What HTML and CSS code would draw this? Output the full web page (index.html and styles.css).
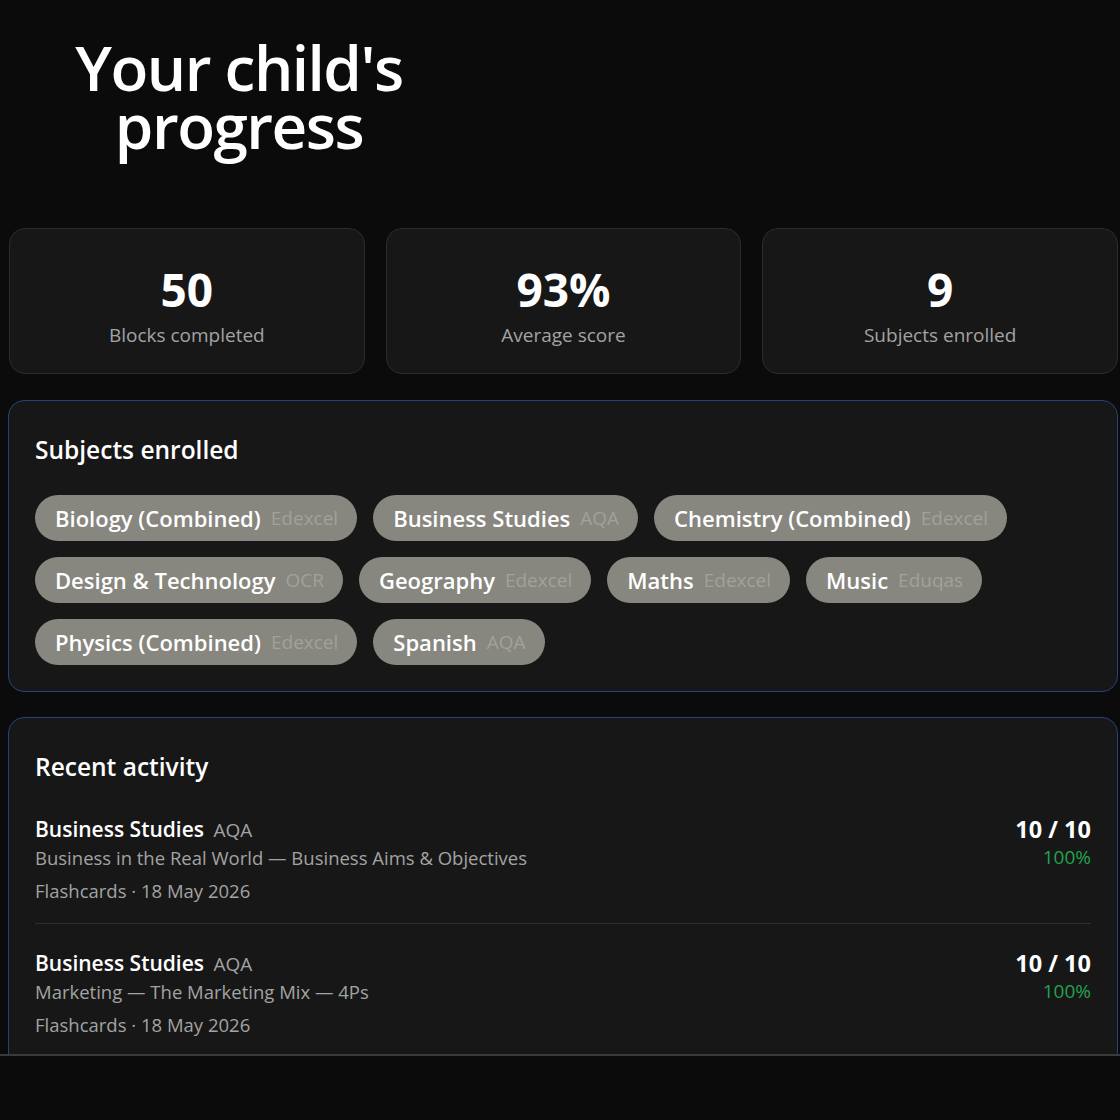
FILE: index.html
```html
<!DOCTYPE html>
<html>
<head>
  <meta charset="utf-8">
  <title>Your child's progress</title>
  <link rel="stylesheet" href="styles.css">
</head>
<body>
  <div class="page">
    <header class="header">
      <h1>Your child's progress</h1>
    </header>

    <div class="stats">
      <div class="stat">
        <div class="stat-value">50</div>
        <div class="stat-label">Blocks completed</div>
      </div>
      <div class="stat">
        <div class="stat-value">93%</div>
        <div class="stat-label">Average score</div>
      </div>
      <div class="stat">
        <div class="stat-value">9</div>
        <div class="stat-label">Subjects enrolled</div>
      </div>
    </div>

    <section class="panel">
      <h2>Subjects enrolled</h2>
      <div class="chips">
        <span class="chip">Biology (Combined) <span class="board">Edexcel</span></span>
        <span class="chip">Business Studies <span class="board">AQA</span></span>
        <span class="chip">Chemistry (Combined) <span class="board">Edexcel</span></span>
        <span class="chip">Design &amp; Technology <span class="board">OCR</span></span>
        <span class="chip">Geography <span class="board">Edexcel</span></span>
        <span class="chip">Maths <span class="board">Edexcel</span></span>
        <span class="chip">Music <span class="board">Eduqas</span></span>
        <span class="chip">Physics (Combined) <span class="board">Edexcel</span></span>
        <span class="chip">Spanish <span class="board">AQA</span></span>
      </div>
    </section>

    <section class="panel activity">
      <h2>Recent activity</h2>
      <div class="item">
        <div class="item-main">
          <div class="item-title">Business Studies <span class="item-board">AQA</span></div>
          <div class="item-topic">Business in the Real World — Business Aims &amp; Objectives</div>
          <div class="item-meta">Flashcards · 18 May 2026</div>
        </div>
        <div class="item-score">
          <div class="score">10 / 10</div>
          <div class="percent">100%</div>
        </div>
      </div>
      <div class="item">
        <div class="item-main">
          <div class="item-title">Business Studies <span class="item-board">AQA</span></div>
          <div class="item-topic">Marketing — The Marketing Mix — 4Ps</div>
          <div class="item-meta">Flashcards · 18 May 2026</div>
        </div>
        <div class="item-score">
          <div class="score">10 / 10</div>
          <div class="percent">100%</div>
        </div>
      </div>
    </section>
  </div>
</body>
</html>
```

FILE: styles.css
```css
body {
  font-family: 'Open Sans', 'Noto Sans', sans-serif;
  margin: 0;
  padding: 0;
  background: #0b0b0b;
  color: #fff;
}
.page {
  height: 1054px;
  overflow: hidden;
  padding: 0 2px 0 8px;
  border-bottom: 2px solid #3a3a3a;
}
.header {
  width: 462px;
  text-align: center;
  padding-top: 38px;
}
h1 {
  margin: 0;
  font-size: 62px;
  font-weight: 600;
  line-height: 58px;
  letter-spacing: -1.5px;
}
.stats {
  display: grid;
  grid-template-columns: repeat(3, 1fr);
  gap: 21px;
  margin-top: 74px;
  padding-left: 1px;
}
.stat {
  background: #171717;
  border: 1px solid #2c2c2c;
  border-radius: 16px;
  height: 146px;
  text-align: center;
  padding-top: 30px;
  box-sizing: border-box;
}
.stat-value {
  font-size: 46px;
  font-weight: 700;
  line-height: 60px;
}
.stat-label {
  font-size: 19px;
  color: #a3a3a3;
  line-height: 26px;
  margin-top: 3px;
}
.panel {
  background: #171717;
  border: 1px solid #23447a;
  border-radius: 16px;
  margin-top: 26px;
  padding: 32px 26px 26px;
}
h2 {
  margin: 0;
  font-size: 24.5px;
  font-weight: 600;
  line-height: 34px;
}
.chips {
  display: flex;
  flex-wrap: wrap;
  gap: 16px;
  margin-top: 28px;
}
.chip {
  display: inline-flex;
  align-items: center;
  gap: 10px;
  height: 46px;
  padding: 0 19px 0 20px;
  border-radius: 23px;
  background: #87867f;
  font-size: 22px;
  font-weight: 600;
}
.board {
  font-size: 19px;
  font-weight: 400;
  color: #a2a19b;
}
.activity {
  margin-top: 25px;
  padding-top: 32px;
}
.activity h2 {
  margin-bottom: 6px;
}
.item {
  display: flex;
  justify-content: space-between;
  padding: 25px 0 18px;
  border-bottom: 1px solid #2e2e2e;
}
.item-title {
  font-size: 21px;
  font-weight: 600;
  line-height: 28px;
}
.item-board {
  font-size: 19px;
  font-weight: 400;
  color: #a3a3a3;
  margin-left: 4px;
}
.item-topic,
.item-meta {
  font-size: 18.5px;
  color: #a3a3a3;
  line-height: 28px;
}
.item-meta {
  margin-top: 5px;
}
.item-score {
  text-align: right;
}
.score {
  font-size: 23.5px;
  font-weight: 700;
  line-height: 28px;
}
.percent {
  font-size: 19px;
  color: #22a34d;
  line-height: 28px;
}
```
